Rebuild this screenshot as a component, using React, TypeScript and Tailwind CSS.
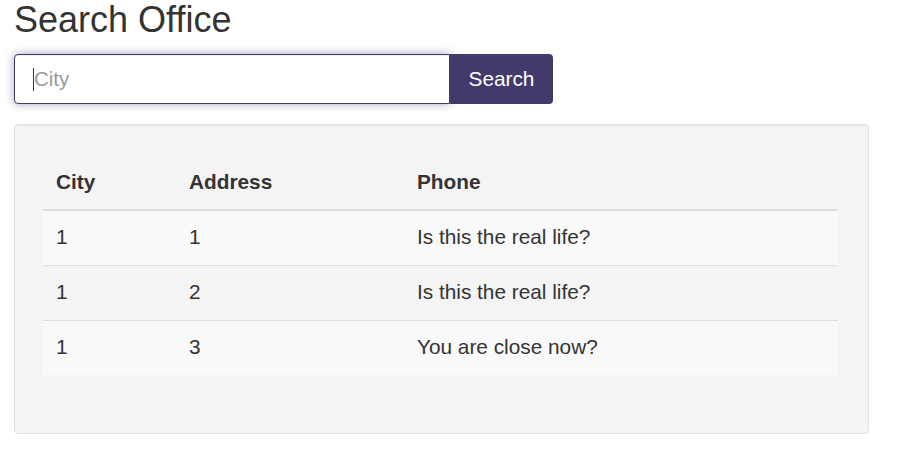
import React from "react";

const rows = [
  { city: "1", address: "1", phone: "Is this the real life?" },
  { city: "1", address: "2", phone: "Is this the real life?" },
  { city: "1", address: "3", phone: "You are close now?" },
];

export default function App() {
  return (
    <div
      className="min-h-[465px] w-[916px] bg-white pl-[14px] text-[#333]"
      style={{ fontFamily: '"Liberation Sans", Arial, sans-serif' }}
    >
      <h1 className="m-0 text-[36px] font-normal leading-[39px]">Search Office</h1>

      <div className="mt-[15px] flex h-[50px] w-[539px]">
        <div className="relative h-[50px] w-[436px] rounded-l-[4px] border border-[#433a6b] bg-white shadow-[inset_0_1px_1px_rgba(0,0,0,0.075),0_0_10px_rgba(67,58,107,0.45)]">
          <input
            className="h-full w-full rounded-l-[4px] bg-transparent pl-[19px] text-[20.5px] leading-[28px] text-[#555] caret-transparent outline-none placeholder:text-[#999]"
            placeholder="City"
          />
          <span className="pointer-events-none absolute left-[18px] top-[13px] h-[23px] w-[1px] bg-[#333]" />
        </div>
        <button className="h-[50px] w-[103px] rounded-r-[4px] bg-[#433a6b] text-[20.8px] leading-[28px] text-white">
          Search
        </button>
      </div>

      <div className="mt-[20px] w-[855px] rounded-[4px] border border-[#e3e3e3] bg-[#f4f4f4] pb-[58px] pl-[28px] pt-[29px] shadow-[inset_0_1px_1px_rgba(0,0,0,0.05)]">
        <table className="w-[795px] border-collapse text-[20.8px] leading-[28px]">
          <thead>
            <tr>
              <th className="w-[133px] border-b-2 border-[#ddd] pb-[13px] pl-[13px] pt-[14px] text-left font-bold">City</th>
              <th className="w-[228px] border-b-2 border-[#ddd] pb-[13px] pl-[13px] pt-[14px] text-left font-bold">Address</th>
              <th className="border-b-2 border-[#ddd] pb-[13px] pl-[13px] pt-[14px] text-left font-bold">Phone</th>
            </tr>
          </thead>
          <tbody>
            {rows.map((r, i) => (
              <tr key={i} className={i % 2 === 0 ? "bg-[#f9f9f9]" : ""}>
                <td className="border-t border-[#ddd] pb-[14px] pl-[13px] pt-[12px]">{r.city}</td>
                <td className="border-t border-[#ddd] pb-[14px] pl-[13px] pt-[12px]">{r.address}</td>
                <td className="border-t border-[#ddd] pb-[14px] pl-[13px] pt-[12px]">{r.phone}</td>
              </tr>
            ))}
          </tbody>
        </table>
      </div>
    </div>
  );
}
